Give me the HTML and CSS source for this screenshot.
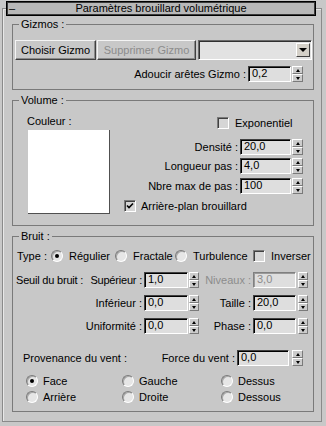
FILE: index.html
```html
<!doctype html>
<html lang="fr">
  <head>
    <meta charset="UTF-8" />
    <meta name="viewport" content="width=device-width, initial-scale=1.0" />
    <title>Paramètres brouillard volumétrique</title>
    <link rel="stylesheet" href="styles.css">
  </head>
  <body>
    <div class="rollout">
      <div class="rollout-head">
        <span class="minus">–</span>
        <span class="title">Paramètres brouillard volumétrique</span>
      </div>

      <fieldset class="group gizmos">
        <legend>Gizmos :</legend>
        <div class="btn-row">
          <button class="btn btn-pick">Choisir Gizmo</button>
          <button class="btn btn-del" disabled>Supprimer Gizmo</button>
          <div class="combo"><span class="combo-btn"><i class="tri-down"></i></span></div>
        </div>
        <div class="spin-row soften">
          <span class="lbl">Adoucir arêtes Gizmo :</span>
          <span class="field w-soft">0,2</span>
          <span class="spin"><i class="up"></i><i class="down"></i></span>
        </div>
      </fieldset>

      <fieldset class="group volume">
        <legend>Volume :</legend>
        <div class="vol-body">
          <div class="vol-left">
            <div class="color-lbl">Couleur :</div>
            <div class="swatch"></div>
          </div>
          <div class="vol-right">
            <label class="check-row exp">
              <span class="check"></span>
              <span>Exponentiel</span>
            </label>
            <div class="spin-row density">
              <span class="lbl">Densité :</span>
              <span class="field w-vol">20,0</span>
              <span class="spin"><i class="up"></i><i class="down"></i></span>
            </div>
            <div class="spin-row step">
              <span class="lbl">Longueur pas :</span>
              <span class="field w-vol">4,0</span>
              <span class="spin"><i class="up"></i><i class="down"></i></span>
            </div>
            <div class="spin-row steps-max">
              <span class="lbl">Nbre max de pas :</span>
              <span class="field w-vol">100</span>
              <span class="spin"><i class="up"></i><i class="down"></i></span>
            </div>
            <label class="check-row bg-fog">
              <span class="check on">
                <svg width="8" height="8" viewBox="0 0 8 8"><path d="M1 3.5 L3 5.5 L7 1.5" fill="none" stroke="#000" stroke-width="1.6"/></svg>
              </span>
              <span>Arrière-plan brouillard</span>
            </label>
          </div>
        </div>
      </fieldset>

      <fieldset class="group noise">
        <legend>Bruit :</legend>
        <div class="type-row">
          <span class="type-lbl">Type :</span>
          <label class="opt o-reg"><span class="radio on"></span>Régulier</label>
          <label class="opt o-frac"><span class="radio"></span>Fractale</label>
          <label class="opt o-turb"><span class="radio"></span>Turbulence</label>
          <label class="opt o-inv"><span class="check"></span>Inverser</label>
        </div>

        <div class="noise-grid">
          <span class="lbl split"><span>Seuil du bruit :</span><span>Supérieur :</span></span>
          <span class="field">1,0</span>
          <span class="spin-cell"><span class="spin"><i class="up"></i><i class="down"></i></span></span>
          <span class="lbl off">Niveaux :</span>
          <span class="field off">3,0</span>
          <span class="spin-cell"><span class="spin"><i class="up"></i><i class="down"></i></span></span>

          <span class="lbl">Inférieur :</span>
          <span class="field">0,0</span>
          <span class="spin-cell"><span class="spin"><i class="up"></i><i class="down"></i></span></span>
          <span class="lbl">Taille :</span>
          <span class="field">20,0</span>
          <span class="spin-cell"><span class="spin"><i class="up"></i><i class="down"></i></span></span>

          <span class="lbl">Uniformité :</span>
          <span class="field">0,0</span>
          <span class="spin-cell"><span class="spin"><i class="up"></i><i class="down"></i></span></span>
          <span class="lbl">Phase :</span>
          <span class="field">0,0</span>
          <span class="spin-cell"><span class="spin"><i class="up"></i><i class="down"></i></span></span>
        </div>

        <div class="wind-row">
          <span class="wind-lbl">Provenance du vent :</span>
          <span class="lbl force">Force du vent :</span>
          <span class="field w-wind">0,0</span>
          <span class="spin"><i class="up"></i><i class="down"></i></span>
        </div>

        <div class="wind-dirs">
          <label class="opt"><span class="radio on"></span>Face</label>
          <label class="opt"><span class="radio"></span>Gauche</label>
          <label class="opt"><span class="radio"></span>Dessus</label>
          <label class="opt"><span class="radio"></span>Arrière</label>
          <label class="opt"><span class="radio"></span>Droite</label>
          <label class="opt"><span class="radio"></span>Dessous</label>
        </div>
      </fieldset>
    </div>
  </body>
</html>
```

FILE: styles.css
```css
* {
  box-sizing: border-box;
}
body {
  margin: 0;
  background: #c8c8c8;
  font-family: "Liberation Sans", Arial, sans-serif;
  font-size: 11px;
  line-height: 14px;
  color: #000;
}
.rollout {
  margin: 8px 4px 0 2px;
  height: 414px;
  border: 1px solid #8a8a8a;
  box-shadow: inset 1px 1px #e8e8e8;
}
.rollout-head {
  margin: -8px 0 0 3px;
  width: 310px;
  height: 15px;
  border: 1px solid #000;
  box-shadow: inset 0 0 0 1px #3a3a3a;
  background: #b8b8b8;
  display: grid;
  grid-template-columns: 20px 1fr 20px;
  align-items: center;
  line-height: 13px;
}
.minus {
  padding-left: 2px;
}
.title {
  text-align: center;
}

/* group boxes */
.group {
  margin: 1px 0 0 9px;
  width: 302px;
  padding: 0;
  min-width: 0;
  border: 1px solid #7a7a7a;
}
.group legend {
  margin-left: 6px;
  padding: 0 2px;
  height: 14px;
  line-height: 14px;
}
.gizmos {
  padding-bottom: 7px;
}
.volume {
  margin-top: 3px;
  padding-bottom: 11px;
}
.noise {
  margin-top: 3px;
  padding-bottom: 7px;
}

/* buttons, fields, spinners */
.btn-row {
  display: flex;
  margin: 9px 0 0 2px;
  height: 20px;
}
.btn {
  height: 20px;
  padding: 0;
  font: inherit;
  color: #000;
  background: #c8c8c8;
  border: 1px solid;
  border-color: #f4f4f4 #404040 #404040 #f4f4f4;
  box-shadow: inset -1px -1px #8a8a8a;
  white-space: nowrap;
}
.btn-pick {
  width: 81px;
}
.btn-del {
  width: 99px;
  margin-left: 1px;
  color: #8c8c8c;
}
.combo {
  width: 114px;
  height: 20px;
  margin-left: 2px;
  border: 1px solid;
  border-color: #6a6a6a #fff #fff #6a6a6a;
  box-shadow: inset 1px 1px #303030;
  background: #e2e2e2;
  display: flex;
  justify-content: flex-end;
  align-items: center;
  padding-right: 1px;
}
.combo-btn {
  width: 14px;
  height: 14px;
  background: #d4d0c8;
  border: 1px solid;
  border-color: #fff #404040 #404040 #fff;
  display: flex;
  justify-content: center;
  align-items: center;
}
.tri-down {
  width: 0;
  height: 0;
  border-left: 4px solid transparent;
  border-right: 4px solid transparent;
  border-top: 4px solid #000;
}
.spin-row {
  display: flex;
  justify-content: flex-end;
  align-items: center;
  height: 16px;
  padding-right: 10px;
}
.soften {
  margin-top: 6px;
}
.lbl {
  margin-right: 2px;
  white-space: nowrap;
}
.field {
  height: 16px;
  padding: 0 0 0 3px;
  line-height: 13px;
  background: #dedede;
  border: 1px solid;
  border-color: #404040 #fff #fff #404040;
  box-shadow: inset 1px 1px #000;
  white-space: nowrap;
}
.field.off {
  color: #8c8c8c;
  border-color: #808080 #fff #fff #808080;
  box-shadow: inset 1px 1px #9a9a9a;
}
.lbl.off {
  color: #8c8c8c;
}
.w-soft {
  width: 43px;
}
.w-vol {
  width: 51px;
}
.w-wind {
  width: 52px;
}
.spin {
  display: flex;
  flex-direction: column;
  width: 11px;
  height: 16px;
  margin-left: 1px;
}
.spin i {
  flex: 1;
  display: flex;
  justify-content: center;
  align-items: center;
  background: #cccccc;
  border: 1px solid;
  border-color: #fff #7a7a7a #7a7a7a #fff;
}
.spin i::after {
  content: "";
  width: 0;
  height: 0;
  border-left: 2px solid transparent;
  border-right: 2px solid transparent;
}
.spin .up::after {
  border-bottom: 3px solid #000;
}
.spin .down::after {
  border-top: 3px solid #000;
}

/* check boxes and radios */
.check {
  width: 12px;
  height: 12px;
  flex: none;
  background: #d6d6d6;
  border: 1px solid;
  border-color: #7a7a7a #fff #fff #7a7a7a;
  box-shadow: inset 1px 1px #404040;
  display: flex;
  justify-content: center;
  align-items: center;
}
.check-row {
  display: flex;
  align-items: center;
  height: 14px;
}
.radio {
  width: 12px;
  height: 12px;
  flex: none;
  border-radius: 50%;
  background: #e6e6e6;
  border: 1px solid;
  border-color: #7a7a7a #fff #fff #7a7a7a;
  box-shadow: inset 1px 1px #a8a8a8;
  display: flex;
  justify-content: center;
  align-items: center;
}
.radio.on::after {
  content: "";
  width: 4px;
  height: 4px;
  border-radius: 50%;
  background: #000;
}
.opt {
  display: flex;
  align-items: center;
  gap: 6px;
  height: 14px;
  white-space: nowrap;
}

/* volume */
.vol-body {
  display: flex;
}
.vol-left {
  width: 102px;
  padding-left: 14px;
}
.color-lbl {
  margin-top: 7px;
}
.swatch {
  margin: 2px 0 0 1px;
  width: 82px;
  height: 84px;
  background: #fff;
  border-right: 1px solid #505050;
  border-bottom: 1px solid #505050;
}
.vol-right {
  flex: 1;
}
.exp {
  margin: 9px 0 0 102px;
  gap: 6px;
}
.density {
  margin-top: 9px;
}
.step {
  margin-top: 3px;
}
.steps-max {
  margin-top: 4px;
}
.bg-fog {
  margin: 5px 0 0 9px;
  gap: 5px;
}

/* noise */
.type-row {
  display: flex;
  align-items: center;
  height: 14px;
  margin-top: 6px;
  padding-left: 4px;
}
.type-lbl {
  width: 34px;
}
.o-reg {
  width: 64px;
}
.o-frac {
  width: 60px;
}
.o-turb {
  width: 78px;
}
.noise-grid {
  display: grid;
  grid-template-columns: 131px 44px 11px 54px 43px 12px;
  grid-auto-rows: 16px;
  row-gap: 7px;
  margin-top: 9px;
  align-items: center;
}
.noise-grid .lbl {
  text-align: right;
  margin-right: 2px;
}
.noise-grid .split {
  display: flex;
  justify-content: space-between;
  padding-left: 3px;
  letter-spacing: -0.2px;
}
.spin-cell {
  display: flex;
}
.spin-cell .spin {
  width: 10px;
}
.noise-grid .spin-cell:nth-child(6n) .spin {
  margin-left: 2px;
}
.wind-row {
  display: flex;
  align-items: center;
  height: 16px;
  margin-top: 16px;
  padding: 0 10px 0 10px;
}
.force {
  margin-left: auto;
}
.wind-row .spin {
  margin-left: 3px;
}
.wind-dirs {
  display: grid;
  grid-template-columns: 96px 99px auto;
  grid-auto-rows: 14px;
  row-gap: 2px;
  margin-top: 8px;
  padding-left: 13px;
}
.wind-dirs .opt {
  gap: 5px;
}
```
